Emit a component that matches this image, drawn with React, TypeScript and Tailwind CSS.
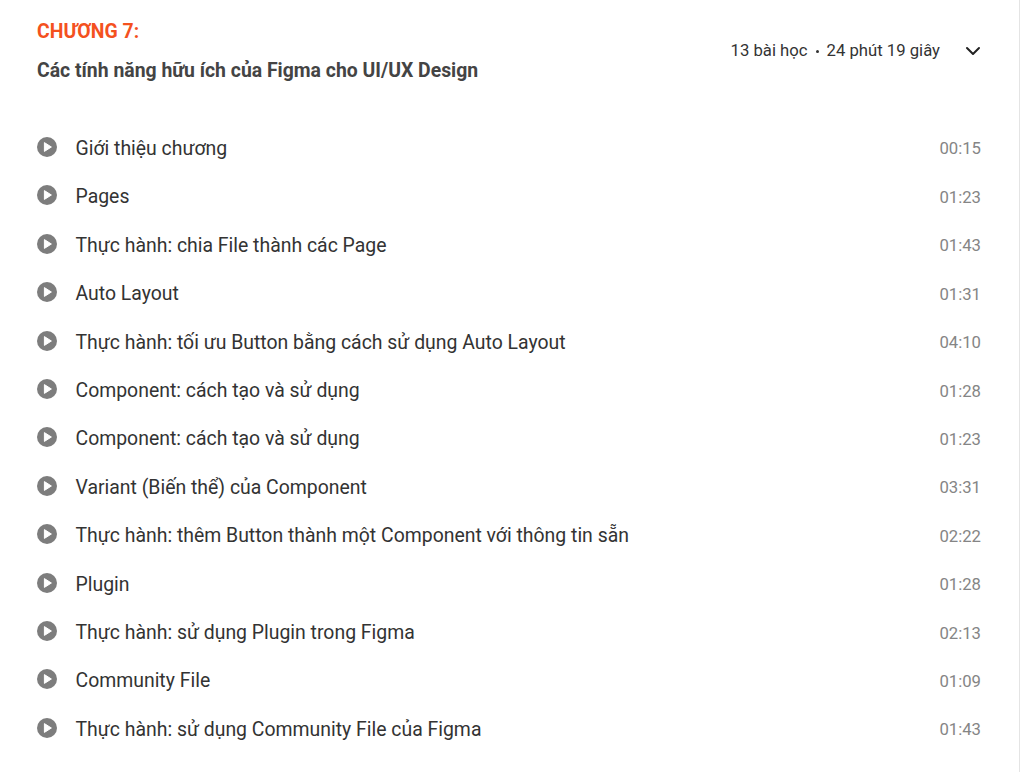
import React from 'react';
import { ChevronDown } from 'lucide-react';

const lessons = [
  ['Giới thiệu chương', '00:15'],
  ['Pages', '01:23'],
  ['Thực hành: chia File thành các Page', '01:43'],
  ['Auto Layout', '01:31'],
  ['Thực hành: tối ưu Button bằng cách sử dụng Auto Layout', '04:10'],
  ['Component: cách tạo và sử dụng', '01:28'],
  ['Component: cách tạo và sử dụng', '01:23'],
  ['Variant (Biến thể) của Component', '03:31'],
  ['Thực hành: thêm Button thành một Component với thông tin sẵn', '02:22'],
  ['Plugin', '01:28'],
  ['Thực hành: sử dụng Plugin trong Figma', '02:13'],
  ['Community File', '01:09'],
  ['Thực hành: sử dụng Community File của Figma', '01:43'],
];

const PlayIcon = () => (
  <svg width="20" height="20" viewBox="0 0 20 20" className="shrink-0 mb-[3px]">
    <circle cx="10" cy="10" r="10" fill="#7d7d7d" />
    <path d="M7.4 5.6 L14.4 10 L7.4 14.4 Z" fill="#fff" stroke="#fff" strokeWidth="1" strokeLinejoin="round" />
  </svg>
);

export default function App() {
  return (
    <div className="w-[1020px] h-[772px] overflow-hidden bg-white border-r border-[#e4e4e4] font-['Roboto',sans-serif] pl-[37px] pr-[38px]">
      <div className="flex justify-between pt-[19px] h-[124px]">
        <div>
          <div className="text-[19.4px] leading-[26px] font-bold text-[#f4511e]">CHƯƠNG 7:</div>
          <div className="mt-[12.5px] text-[19.4px] leading-[26px] font-bold text-[#444444]">
            Các tính năng hữu ích của Figma cho UI/UX Design
          </div>
        </div>
        <div className="flex items-center h-[26px] mt-[19px] text-[#333333]">
          <span className="text-[16.7px] leading-[26px]">13 bài học</span>
          <span className="mx-[8px] w-[3px] h-[3px] rounded-full bg-[#333333]" />
          <span className="text-[16.7px] leading-[26px]">24 phút 19 giây</span>
          <ChevronDown className="ml-[21px] w-[24px] h-[24px] mr-[-4px] text-[#222222]" strokeWidth={2} />
        </div>
      </div>
      <div className="flex flex-col pt-[0.3px]">
        {lessons.map(([title, time], i) => (
          <div key={i} className="flex items-center h-[48.42px]">
            <PlayIcon />
            <span className="ml-[18.5px] text-[19.42px] text-[#333333]">{title}</span>
            <span className="ml-auto pt-[1px] text-[16.7px] text-[#858585]">{time}</span>
          </div>
        ))}
      </div>
    </div>
  );
}
